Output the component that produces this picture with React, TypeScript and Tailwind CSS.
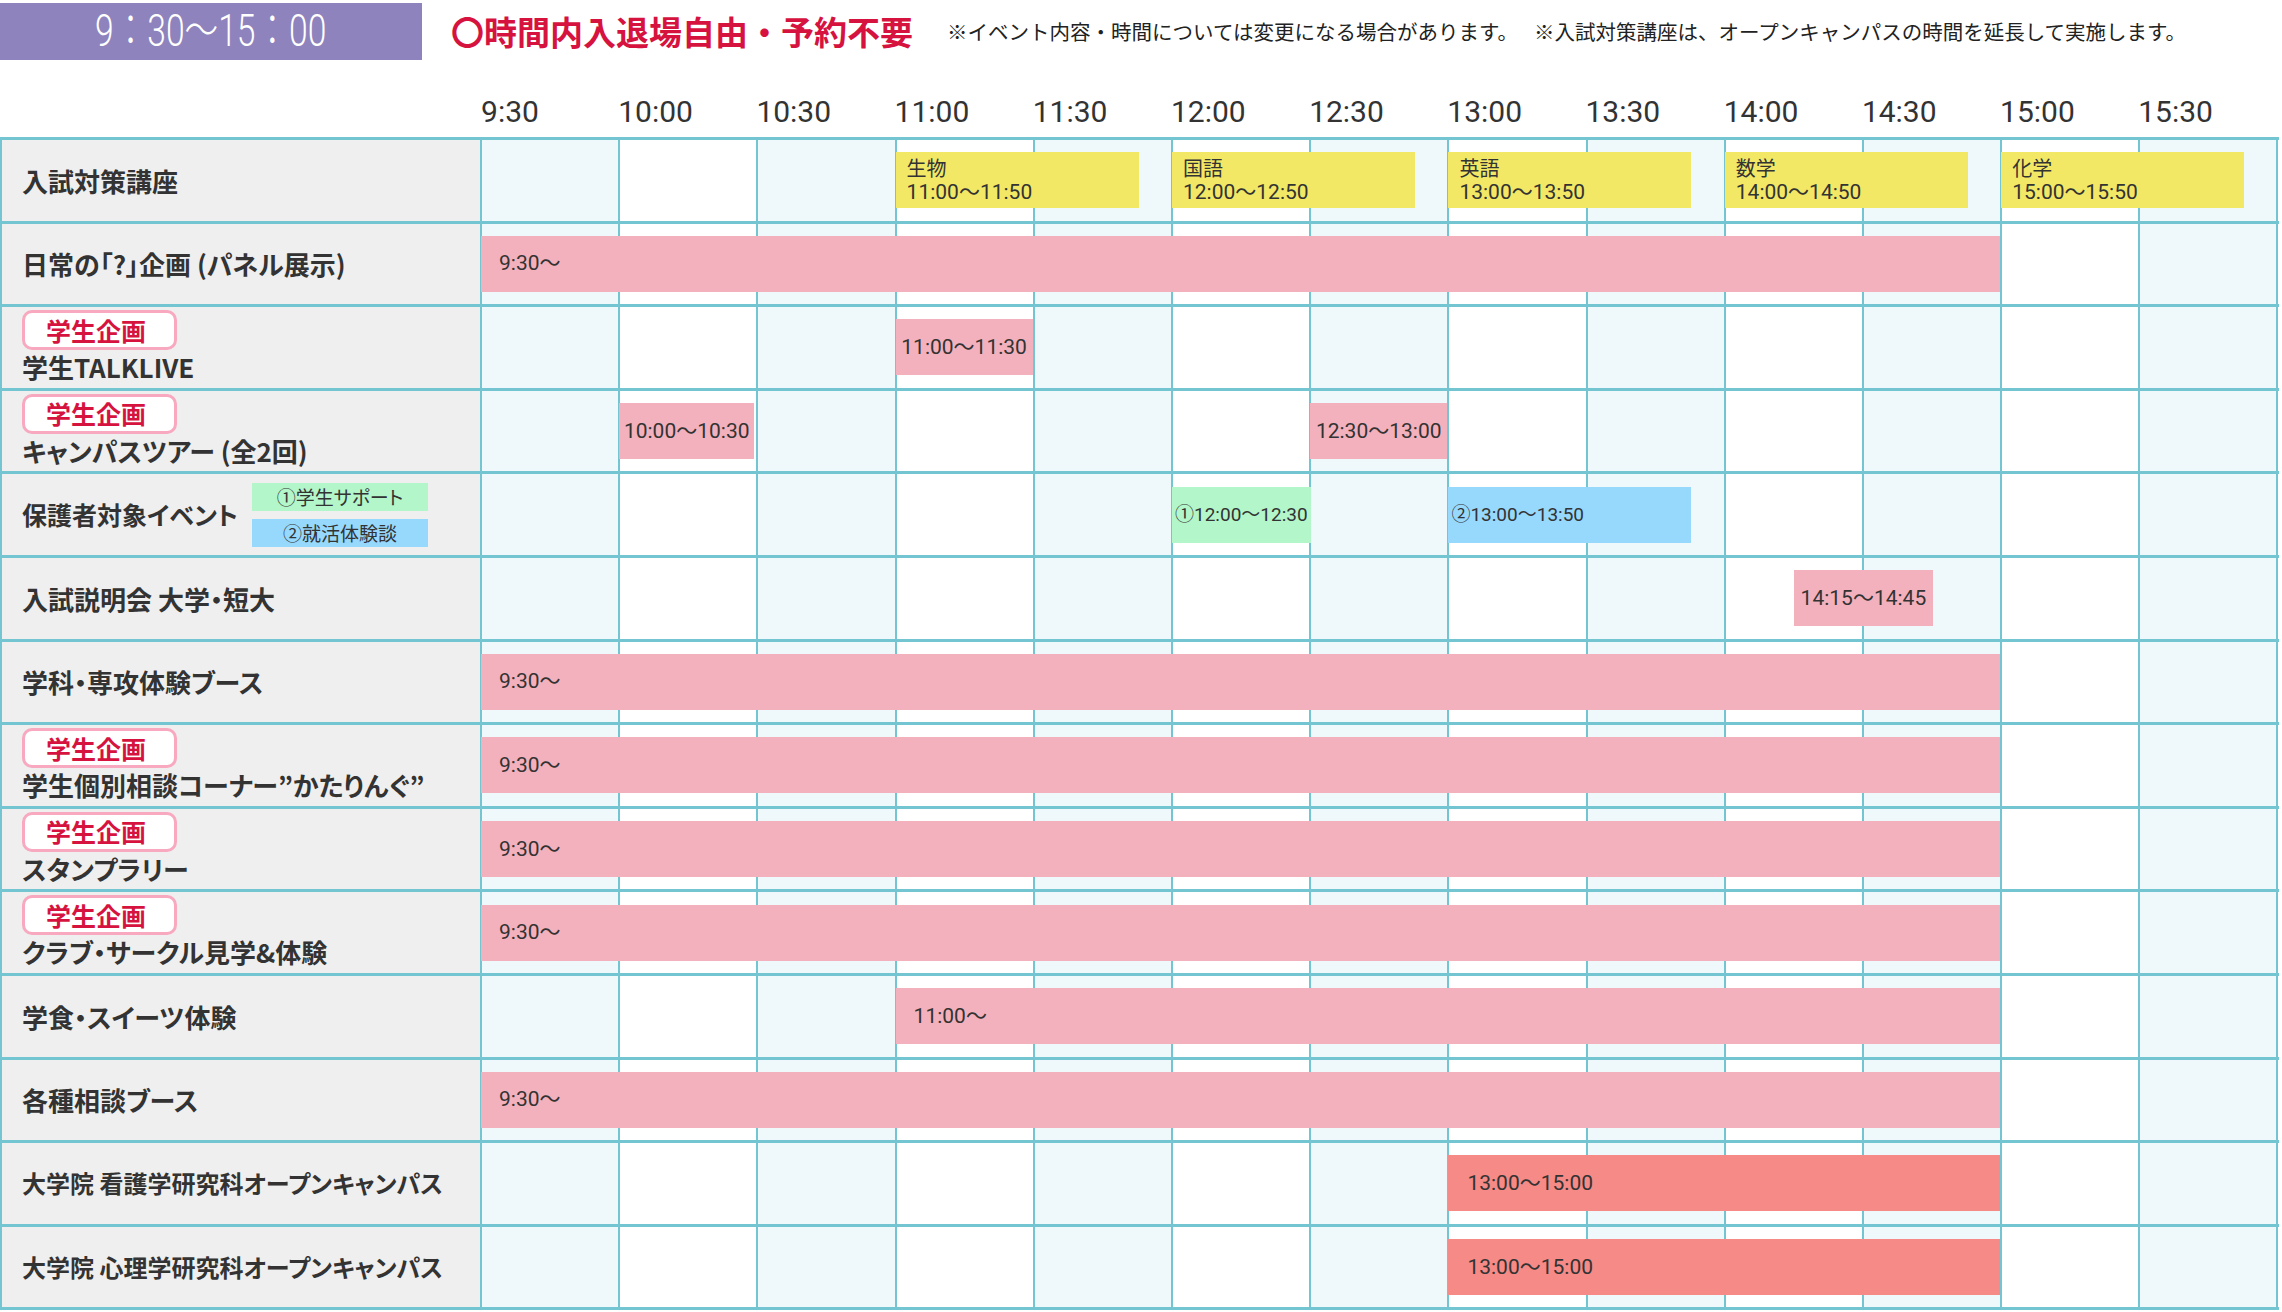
import React from 'react';

const COL_W = 138.2;
const PX = COL_W / 30; // px per minute, measured from 9:30

const times = ['9:30', '10:00', '10:30', '11:00', '11:30', '12:00', '12:30', '13:00', '13:30', '14:00', '14:30', '15:00', '15:30'];

type Kind = 'yellow' | 'pink' | 'pinkC' | 'green' | 'blue' | 'salmon';

type Bar = {
  start: number;
  end?: number;
  w?: number;
  kind: Kind;
  text: string;
  title?: string;
};

type Row = {
  label: string;
  badge?: boolean;
  subs?: boolean;
  small?: boolean;
  bars: Bar[];
};

const full = (text = '9:30～'): Bar => ({ start: 0, end: 330, kind: 'pink', text });

const rows: Row[] = [
  {
    label: '入試対策講座',
    bars: [
      { start: 90, w: 243, kind: 'yellow', title: '生物', text: '11:00～11:50' },
      { start: 150, w: 243, kind: 'yellow', title: '国語', text: '12:00～12:50' },
      { start: 210, w: 243, kind: 'yellow', title: '英語', text: '13:00～13:50' },
      { start: 270, w: 243, kind: 'yellow', title: '数学', text: '14:00～14:50' },
      { start: 330, w: 243, kind: 'yellow', title: '化学', text: '15:00～15:50' },
    ],
  },
  { label: '日常の「?」企画 (パネル展示)', bars: [full()] },
  { label: '学生TALKLIVE', badge: true, bars: [{ start: 90, w: 137, kind: 'pinkC', text: '11:00～11:30' }] },
  {
    label: 'キャンパスツアー (全2回)',
    badge: true,
    bars: [
      { start: 30, w: 135, kind: 'pinkC', text: '10:00～10:30' },
      { start: 180, w: 137, kind: 'pinkC', text: '12:30～13:00' },
    ],
  },
  {
    label: '保護者対象イベント',
    subs: true,
    bars: [
      { start: 150, w: 139, kind: 'green', text: '①12:00～12:30' },
      { start: 210, w: 243, kind: 'blue', text: '②13:00～13:50' },
    ],
  },
  { label: '入試説明会 大学・短大', bars: [{ start: 285, w: 139, kind: 'pinkC', text: '14:15～14:45' }] },
  { label: '学科・専攻体験ブース', bars: [full()] },
  { label: '学生個別相談コーナー”かたりんぐ”', badge: true, bars: [full()] },
  { label: 'スタンプラリー', badge: true, bars: [full()] },
  { label: 'クラブ・サークル見学&体験', badge: true, bars: [full()] },
  { label: '学食・スイーツ体験', bars: [{ start: 90, end: 330, kind: 'pink', text: '11:00～' }] },
  { label: '各種相談ブース', bars: [full()] },
  { label: '大学院 看護学研究科オープンキャンパス', small: true, bars: [{ start: 210, end: 330, kind: 'salmon', text: '13:00～15:00' }] },
  { label: '大学院 心理学研究科オープンキャンパス', small: true, bars: [{ start: 210, end: 330, kind: 'salmon', text: '13:00～15:00' }] },
];

const kindClass: Record<Kind, string> = {
  yellow: 'bg-[#f2e866] flex-col justify-center pl-[11px]',
  pink: 'bg-[#f3b1bd] items-center pl-[18px] text-[21px]',
  pinkC: 'bg-[#f3b1bd] items-center justify-center text-[21px]',
  green: 'bg-[#b2f6c9] items-center pl-[3px] text-[19px]',
  blue: 'bg-[#97d9fd] items-center pl-[3px] text-[19px]',
  salmon: 'bg-[#f58a87] items-center pl-[19px] text-[21px]',
};

function BarView({ b }: { b: Bar }) {
  const left = b.start * PX - 1;
  const width = b.w ?? (b.end! - b.start) * PX - 1;
  return (
    <div
      className={`absolute top-1/2 -translate-y-1/2 h-[56px] flex whitespace-nowrap text-[#333] font-['Roboto','Noto_Sans_CJK_JP',sans-serif] ${kindClass[b.kind]}`}
      style={{ left, width }}
    >
      {b.title ? (
        <>
          <span className="text-[20px] leading-[24px] font-['Noto_Sans_CJK_JP',sans-serif]">{b.title}</span>
          <span className="text-[21px] leading-[24px]">{b.text}</span>
        </>
      ) : (
        <span className="leading-none">{b.text}</span>
      )}
    </div>
  );
}

function Badge() {
  return (
    <div className="w-[155px] h-[40px] shrink-0 border-[3px] border-[#f8a8bf] rounded-[10px] bg-white flex items-center pl-[21px]">
      <span className="text-[25px] font-bold leading-none text-[#d6133f]">学生企画</span>
    </div>
  );
}

function Label({ r }: { r: Row }) {
  if (r.badge) {
    return (
      <div className="flex flex-col items-start pt-[3px] gap-[2px]">
        <Badge />
        <span className="text-[26px] leading-[30px] font-bold whitespace-nowrap">{r.label}</span>
      </div>
    );
  }
  if (r.subs) {
    return (
      <div className="flex items-center h-full">
        <span className="w-[230px] text-[25px] font-bold whitespace-nowrap">{r.label}</span>
        <div className="flex flex-col gap-[8px] text-[19px] leading-none">
          <div className="w-[176px] h-[28px] bg-[#b2f6c9] flex items-center justify-center">①学生サポート</div>
          <div className="w-[176px] h-[28px] bg-[#97d9fd] flex items-center justify-center">②就活体験談</div>
        </div>
      </div>
    );
  }
  return (
    <div className="flex items-center h-full">
      <span className={`font-bold whitespace-nowrap ${r.small ? 'text-[24px]' : 'text-[26px]'}`}>{r.label}</span>
    </div>
  );
}

export default function App() {
  return (
    <div className="w-[2282px] h-[1312px] overflow-hidden bg-white text-[#333] font-['Noto_Sans_CJK_JP',sans-serif] [font-feature-settings:'palt']">
      {/* title bar */}
      <div className="flex items-center pt-[3px] h-[60px]">
        <div className="w-[422px] h-[57px] shrink-0 bg-[#8e83bd] flex items-center justify-center">
          <span className="inline-block scale-x-[0.84] scale-y-[1.1] text-white text-[40px] font-light leading-none font-['Roboto','Noto_Sans_CJK_JP',sans-serif] [font-feature-settings:normal]">
            9：30～15：00
          </span>
        </div>
        <div className="ml-[29px] text-[33px] font-bold leading-none text-[#d6133f] whitespace-nowrap [font-feature-settings:normal]">
          〇時間内入退場自由・予約不要
        </div>
        <div className="ml-[34px] flex text-[20.5px] leading-none text-[#222] whitespace-nowrap [font-feature-settings:normal]">
          <span>※イベント内容・時間については変更になる場合があります。</span>
          <span className="ml-[16px]">※入試対策講座は、オープンキャンパスの時間を延長して実施します。</span>
        </div>
      </div>

      {/* time header */}
      <div className="flex h-[77px] pt-[27px] items-center">
        <div className="w-[482px] shrink-0" />
        {times.map((t) => (
          <div key={t} className="w-[138.2px] shrink-0">
            <div className="w-[60px] -ml-[2px] text-center text-[30px] leading-none text-[#333] font-['Roboto',sans-serif]">{t}</div>
          </div>
        ))}
      </div>

      {/* schedule table */}
      <div className="w-[2279px] border-t-[3px] border-l-2 border-[#73c6d1]">
        {rows.map((r, i) => (
          <div key={i} className="flex h-[83.6px] border-b-[3px] border-[#73c6d1]">
            <div className="w-[480px] shrink-0 bg-[#efefef] border-r-2 border-[#73c6d1] pl-[20px]">
              <Label r={r} />
            </div>
            <div className="relative flex">
              {times.map((t, j) => (
                <div
                  key={t}
                  className={`w-[138.2px] shrink-0 border-r-2 border-[#73c6d1] ${j % 2 === 0 ? 'bg-[#eff8fa]' : 'bg-white'}`}
                />
              ))}
              {r.bars.map((b, k) => (
                <BarView key={k} b={b} />
              ))}
            </div>
          </div>
        ))}
      </div>
    </div>
  );
}
